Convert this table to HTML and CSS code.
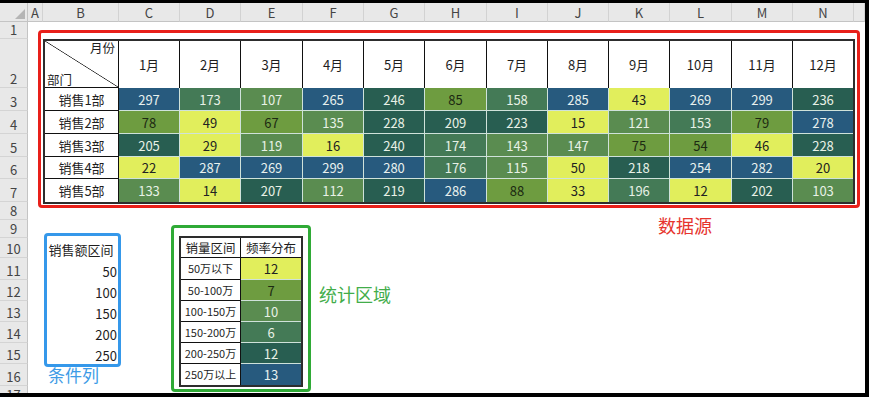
FILE: index.html
```html
<!DOCTYPE html>
<html lang="zh">
<head>
<meta charset="utf-8">
<title>销售频率分布</title>
<link rel="stylesheet" href="styles.css">
</head>
<body>
<div class="frame">
<div class="sheet">
  <div class="corner"><svg width="27" height="18" viewBox="0 0 27 18"><polygon points="25,6 25,16 15,16" fill="#b5b5b5"/></svg></div>
  <div class="ch">A</div><div class="ch">B</div><div class="ch">C</div><div class="ch">D</div><div class="ch">E</div><div class="ch">F</div><div class="ch">G</div><div class="ch">H</div><div class="ch">I</div><div class="ch">J</div><div class="ch">K</div><div class="ch">L</div><div class="ch">M</div><div class="ch">N</div><div class="ch"></div>

  <div class="rh">1</div><div class="rh">2</div><div class="rh">3</div><div class="rh">4</div><div class="rh">5</div><div class="rh">6</div><div class="rh">7</div><div class="rh">8</div><div class="rh">9</div><div class="rh">10</div><div class="rh">11</div><div class="rh">12</div><div class="rh">13</div><div class="rh">14</div><div class="rh">15</div><div class="rh">16</div><div class="rh last">17</div>

  <div class="data">
    <div class="diag"><span class="top">月份</span><span class="bot">部门</span></div>
    <div class="hd">1月</div><div class="hd">2月</div><div class="hd">3月</div><div class="hd">4月</div><div class="hd">5月</div><div class="hd">6月</div><div class="hd">7月</div><div class="hd">8月</div><div class="hd">9月</div><div class="hd">10月</div><div class="hd">11月</div><div class="hd">12月</div>

    <div class="dept">销售1部</div>
    <div class="v c6">297</div><div class="v c4">173</div><div class="v c3">107</div><div class="v c6">265</div><div class="v c5">246</div><div class="v c2">85</div><div class="v c4">158</div><div class="v c6">285</div><div class="v c1">43</div><div class="v c6">269</div><div class="v c6">299</div><div class="v c5">236</div>

    <div class="dept">销售2部</div>
    <div class="v c2">78</div><div class="v c1">49</div><div class="v c2">67</div><div class="v c3">135</div><div class="v c5">228</div><div class="v c5">209</div><div class="v c5">223</div><div class="v c1">15</div><div class="v c3">121</div><div class="v c4">153</div><div class="v c2">79</div><div class="v c6">278</div>

    <div class="dept">销售3部</div>
    <div class="v c5">205</div><div class="v c1">29</div><div class="v c3">119</div><div class="v c1">16</div><div class="v c5">240</div><div class="v c4">174</div><div class="v c3">143</div><div class="v c3">147</div><div class="v c2">75</div><div class="v c2">54</div><div class="v c1">46</div><div class="v c5">228</div>

    <div class="dept">销售4部</div>
    <div class="v c1">22</div><div class="v c6">287</div><div class="v c6">269</div><div class="v c6">299</div><div class="v c6">280</div><div class="v c4">176</div><div class="v c3">115</div><div class="v c1">50</div><div class="v c5">218</div><div class="v c6">254</div><div class="v c6">282</div><div class="v c1">20</div>

    <div class="dept">销售5部</div>
    <div class="v c3">133</div><div class="v c1">14</div><div class="v c5">207</div><div class="v c3">112</div><div class="v c5">219</div><div class="v c6">286</div><div class="v c2">88</div><div class="v c1">33</div><div class="v c4">196</div><div class="v c1">12</div><div class="v c5">202</div><div class="v c3">103</div>
  </div>

  <div class="list">
    <div class="lh">销售额区间</div>
    <div>50</div>
    <div>100</div>
    <div>150</div>
    <div>200</div>
    <div>250</div>
  </div>

  <div class="freq">
    <div class="fh">销量区间</div><div class="fh">频率分布</div>
    <div class="fl">50万以下</div><div class="fv c1">12</div>
    <div class="fl">50-100万</div><div class="fv c2">7</div>
    <div class="fl">100-150万</div><div class="fv c3">10</div>
    <div class="fl">150-200万</div><div class="fv c4">6</div>
    <div class="fl">200-250万</div><div class="fv c5">12</div>
    <div class="fl">250万以上</div><div class="fv c6">13</div>
  </div>

  <div class="box box-red"></div>
  <div class="box box-blue"></div>
  <div class="box box-green"></div>
  <div class="note note-red">数据源</div>
  <div class="note note-blue">条件列</div>
  <div class="note note-green">统计区域</div>
</div>
</div>
</body>
</html>
```

FILE: styles.css
```css
* { box-sizing: border-box; }
html, body { margin: 0; padding: 0; background: #fff; }
body {
  font-family: "Noto Sans CJK SC", "Liberation Sans", sans-serif;
  font-size: 13px;
  color: #1e1e1e;
}
.frame {
  width: 869px;
  height: 397px;
  border-top: 3px solid #000;
  border-right: 4px solid #000;
  border-bottom: 4px solid #000;
  overflow: hidden;
}
.sheet {
  position: relative;
  width: 865px;
  height: 390px;
  display: grid;
  grid-template-columns: 28px 15px 76px 61px 61px 62px 61px 61px 62px 61px 61px 61px 62px 61px 61px 11px;
  grid-template-rows: 19px 17px 49px 23px 23px 23px 22px 23px 18px 18px 20px 22px 21px 21px 21px 21px 22px 7px;
}
.corner {
  grid-area: 1 / 1;
  background: #e8e8e8;
  border-right: 1px solid #c4c4c4;
  border-bottom: 1px solid #c4c4c4;
}
.corner svg { display: block; }
.ch {
  grid-row: 1;
  background: #e8e8e8;
  border-right: 1px solid #d2d2d2;
  border-bottom: 1px solid #c4c4c4;
  display: flex;
  align-items: center;
  justify-content: center;
  color: #444;
  line-height: 17px;
}
.rh {
  grid-column: 1;
  background: #e8e8e8;
  border-right: 1px solid #c4c4c4;
  border-bottom: 1px solid #d4d4d4;
  display: flex;
  align-items: flex-end;
  justify-content: center;
  color: #444;
  line-height: 15px;
  padding-bottom: 1px;
}
.rh.last { align-items: flex-start; border-bottom: 0; padding: 0; line-height: 17px; overflow: hidden; }

/* main data table */
.data {
  grid-area: 3 / 3 / 9 / 16;
  margin: 0 -1px -2px 0;
  border: 2px solid #2d2d2d;
  display: grid;
  grid-template-columns: 74px 61px 61px 62px 61px 61px 62px 61px 61px 61px 62px 61px 60px;
  grid-template-rows: 47px 23px 23px 23px 22px 23px;
}
.data > div {
  display: flex;
  align-items: center;
  justify-content: center;
  line-height: 17px;
  white-space: nowrap;
}
.data > div.diag {
  flex-direction: column;
  justify-content: space-between;
  align-items: stretch;
  padding: 0 2px 0 2px;
  font-size: 12.5px;
  line-height: 14px;
  border-right: 1px solid #111;
  border-bottom: 1px solid #111;
  background: linear-gradient(to top right, #fff calc(50% - 0.7px), #222 50%, #fff calc(50% + 0.7px));
}
.diag .top { align-self: flex-end; padding-right: 1px; background: #fff; }
.diag .bot { align-self: flex-start; }
.hd { background: #fff; border-right: 1px solid #111; }
.dept { background: #fff; border-right: 1px solid #111; border-bottom: 1px solid #111; }
.v { border-right: 1px solid #cfe2da; border-bottom: 1px solid #cfe2da; }
.data > :nth-child(13n) { border-right: 0; }
.data > :nth-last-child(-n+13) { border-bottom: 0; }

.c1 { background: #e1ee5c; color: #222; }
.c2 { background: #6e9c40; color: #1c2a12; }
.c3 { background: #5a8c50; color: #e8f1e6; }
.c4 { background: #447a56; color: #e8f1e6; }
.c5 { background: #285e51; color: #e8f1e6; }
.c6 { background: #275a7e; color: #e8f1ee; }

/* criteria list */
.list {
  grid-area: 11 / 3 / 17 / 4;
  display: grid;
  grid-template-rows: 20px 22px 21px 21px 21px 21px;
}
.list > div {
  display: flex;
  align-items: flex-end;
  justify-content: flex-end;
  padding-right: 2px;
  line-height: 17px;
}
.list > .lh { justify-content: center; padding-right: 0; }

/* frequency table */
.freq {
  grid-area: 11 / 5 / 18 / 7;
  margin: -2px 0 -1px -1px;
  border: 2px solid #2d2d2d;
  display: grid;
  grid-template-columns: 60px 60px;
  grid-template-rows: 20px 22px 21px 21px 21px 21px 21px;
}
.freq > div {
  display: flex;
  align-items: center;
  justify-content: center;
  line-height: 15px;
  white-space: nowrap;
}
.fh { background: #fff; font-size: 12.5px; border-bottom: 1px solid #111; }
.fh:first-child { border-right: 1px solid #111; }
.fl { background: #fff; font-size: 11px; border-right: 1px solid #111; border-bottom: 1px solid #111; }
.fv { font-size: 13px; border-bottom: 1px solid #cfe2da; }
.freq > :nth-last-child(-n+2) { border-bottom: 0; }

/* annotation frames and labels */
.box {
  position: absolute;
  border-style: solid;
  border-width: 3px;
  border-radius: 4px;
  pointer-events: none;
}
.box-red { left: 38px; top: 27px; width: 822px; height: 178px; border-color: #e8201a; }
.box-blue { left: 44px; top: 230px; width: 77px; height: 134px; border-color: #3598ea; }
.box-green { left: 171px; top: 222px; width: 140px; height: 167px; border-color: #2faa36; }
.note { position: absolute; line-height: 1; white-space: nowrap; }
.note-red { left: 658px; top: 213px; font-size: 18px; color: #e6342e; }
.note-blue { left: 48px; top: 363px; font-size: 17px; color: #3d9be6; }
.note-green { left: 319px; top: 282px; font-size: 18px; color: #42ad4a; }
```
